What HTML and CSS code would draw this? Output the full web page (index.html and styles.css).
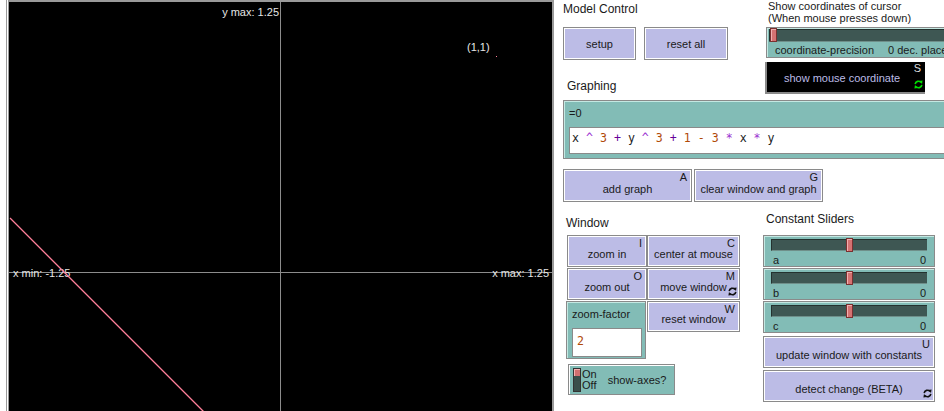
FILE: index.html
```html
<!DOCTYPE html>
<html>
<head>
<meta charset="utf-8">
<link rel="stylesheet" href="styles.css">
</head>
<body>
<div class="app">
  <div class="view">
    <svg width="555" height="411" viewBox="0 0 555 411" class="view-svg">
      <rect x="0" y="0" width="555" height="411" fill="#ffffff"/>
      <rect x="6" y="0" width="1" height="411" fill="#9a9a9a"/>
      <rect x="8" y="0" width="1" height="411" fill="#9a9a9a"/>
      <rect x="9" y="0" width="544" height="2" fill="#9a9a9a"/>
      <rect x="9" y="2" width="543" height="409" fill="#000000"/>
      <rect x="552" y="0" width="2" height="411" fill="#9a9a9a"/>
      <line x1="280.5" y1="2" x2="280.5" y2="411" stroke="#8c8c8c" stroke-width="1"/>
      <line x1="9" y1="272.5" x2="552" y2="272.5" stroke="#8c8c8c" stroke-width="1"/>
      <text x="279" y="16" class="vlabel" text-anchor="end">y max: 1.25</text>
      <text x="13" y="277" class="vlabel">x min: -1.25</text>
      <text x="549" y="277" class="vlabel" text-anchor="end">x max: 1.25</text>
      <text x="467" y="51" class="vlabel">(1,1)</text>
      <line x1="10" y1="218" x2="204" y2="412" stroke="#ff7f9a" stroke-width="1.3"/>
      <rect x="496" y="56" width="1" height="1" fill="#ff7f9a"/>
    </svg>
  </div>

  <div class="panel">
    <div class="top">
      <div class="mc">
        <div class="note big mc-label">Model Control</div>
        <div class="btn-row">
          <div class="btn setup"><span class="btn-text">setup</span></div>
          <div class="btn reset"><span class="btn-text">reset all</span></div>
        </div>
        <div class="note big graph-label">Graphing</div>
      </div>
      <div class="sc">
        <div class="note small coords-note">Show coordinates of cursor<br>(When mouse presses down)</div>
        <div class="slider prec">
          <div class="track"><div class="knob knob-left"></div></div>
          <div class="slider-labels"><span>coordinate-precision</span><span class="prec-val">0 dec. places</span></div>
        </div>
        <div class="btn black-btn">
          <span class="btn-text">show mouse coordinate</span>
          <span class="key key-light">S</span>
          <svg class="cycle" width="9" height="9" viewBox="0 0 9 9">
            <path d="M1.2 4.2 A3.3 3.3 0 0 1 7 2.4" fill="none" stroke="#00e000" stroke-width="1.6"/>
            <path d="M5.2 1 L8.6 0.6 L8 4 Z" fill="#00e000"/>
            <path d="M7.8 4.8 A3.3 3.3 0 0 1 2 6.6" fill="none" stroke="#00e000" stroke-width="1.6"/>
            <path d="M3.8 8 L0.4 8.4 L1 5 Z" fill="#00e000"/>
          </svg>
        </div>
      </div>
    </div>

    <div class="input-box">
      <div class="input-label">=0</div>
      <div class="input-field code"><span class="v">x</span> <span class="op">^</span> <span class="n">3</span> <span class="pl">+</span> <span class="v">y</span> <span class="op">^</span> <span class="n">3</span> <span class="pl">+</span> <span class="n">1</span> <span class="n">-</span> <span class="n">3</span> <span class="op">*</span> <span class="v">x</span> <span class="op">*</span> <span class="v">y</span></div>
    </div>

    <div class="btn-row graph-btns">
      <div class="btn add"><span class="btn-text">add graph</span><span class="key">A</span></div>
      <div class="btn clear"><span class="btn-text">clear window and graph</span><span class="key">G</span></div>
    </div>

    <div class="bottom">
      <div class="win">
        <div class="note big win-label">Window</div>
        <div class="win-grid">
          <div class="win-left">
            <div class="btn wbtn"><span class="btn-text">zoom in</span><span class="key">I</span></div>
            <div class="btn wbtn"><span class="btn-text">zoom out</span><span class="key">O</span></div>
            <div class="zf">
              <div class="input-label">zoom-factor</div>
              <div class="zf-field code"><span class="n">2</span></div>
            </div>
          </div>
          <div class="win-right">
            <div class="btn wbtn2"><span class="btn-text">center at mouse</span><span class="key">C</span></div>
            <div class="btn wbtn2"><span class="btn-text">move window</span><span class="key">M</span>
              <svg class="cycle" width="9" height="9" viewBox="0 0 9 9">
                <path d="M1.2 4.2 A3.3 3.3 0 0 1 7 2.4" fill="none" stroke="#111" stroke-width="1.6"/>
                <path d="M5.2 1 L8.6 0.6 L8 4 Z" fill="#111"/>
                <path d="M7.8 4.8 A3.3 3.3 0 0 1 2 6.6" fill="none" stroke="#111" stroke-width="1.6"/>
                <path d="M3.8 8 L0.4 8.4 L1 5 Z" fill="#111"/>
              </svg>
            </div>
            <div class="btn wbtn2 reset-win"><span class="btn-text">reset window</span><span class="key">W</span></div>
          </div>
        </div>
        <div class="switch">
          <div class="toggle"><div class="toggle-top"></div><div class="toggle-bot"></div></div>
          <div class="onoff"><span>On</span><span>Off</span></div>
          <div class="switch-label">show-axes?</div>
        </div>
      </div>

      <div class="consts">
        <div class="note big const-label">Constant Sliders</div>
        <div class="slider cs">
          <div class="track"><div class="knob knob-mid"></div></div>
          <div class="slider-labels"><span>a</span><span>0</span></div>
        </div>
        <div class="slider cs">
          <div class="track"><div class="knob knob-mid"></div></div>
          <div class="slider-labels"><span>b</span><span>0</span></div>
        </div>
        <div class="slider cs">
          <div class="track"><div class="knob knob-mid"></div></div>
          <div class="slider-labels"><span>c</span><span>0</span></div>
        </div>
        <div class="btn cbtn update"><span class="btn-text">update window with constants</span><span class="key">U</span></div>
        <div class="btn cbtn"><span class="btn-text">detect change (BETA)</span>
          <svg class="cycle" width="9" height="9" viewBox="0 0 9 9">
            <path d="M1.2 4.2 A3.3 3.3 0 0 1 7 2.4" fill="none" stroke="#111" stroke-width="1.6"/>
            <path d="M5.2 1 L8.6 0.6 L8 4 Z" fill="#111"/>
            <path d="M7.8 4.8 A3.3 3.3 0 0 1 2 6.6" fill="none" stroke="#111" stroke-width="1.6"/>
            <path d="M3.8 8 L0.4 8.4 L1 5 Z" fill="#111"/>
          </svg>
        </div>
      </div>
    </div>
  </div>
</div>
</body>
</html>
```

FILE: styles.css
```css
html, body {
  margin: 0;
  padding: 0;
  background: #ffffff;
}
body {
  width: 944px;
  height: 411px;
  overflow: hidden;
  font-family: "Liberation Sans", Arial, sans-serif;
  font-size: 11px;
  color: #1a1a1a;
}
.app {
  display: flex;
  width: 944px;
  height: 411px;
}
.view {
  width: 555px;
  height: 411px;
  flex: none;
}
.view-svg {
  display: block;
}
.vlabel {
  font-family: "Liberation Sans", Arial, sans-serif;
  font-size: 11px;
  fill: #e6e6e6;
}
.panel {
  flex: none;
  width: 389px;
  padding-left: 8px;
  box-sizing: border-box;
  overflow: hidden;
}
.note {
  color: #1a1a1a;
  white-space: nowrap;
}
.big {
  font-size: 12px;
  line-height: 14px;
}
.small {
  font-size: 11px;
  line-height: 12px;
}
.top {
  display: flex;
  height: 100px;
}
.mc {
  width: 202px;
  flex: none;
}
.mc-label {
  margin-top: 2px;
  height: 14px;
}
.btn-row {
  display: flex;
}
.mc .btn-row {
  margin-top: 11px;
  gap: 8px;
}
.btn {
  position: relative;
  background: #bcbce6;
  border: 1px solid #8a8a8a;
  box-shadow: inset 1px 1px 0 #ffffff, inset -1px -1px 0 #ffffff;
  box-sizing: border-box;
  display: flex;
  align-items: center;
  justify-content: center;
  white-space: nowrap;
}
.btn-text {
  font-size: 11px;
  color: #1a1a1a;
}
.key {
  position: absolute;
  top: 1px;
  right: 4px;
  font-size: 11px;
  line-height: 12px;
  color: #1a1a1a;
}
.cycle {
  position: absolute;
  right: 2px;
  bottom: 3px;
}
.setup {
  width: 73px;
  height: 33px;
}
.reset {
  width: 84px;
  height: 33px;
}
.graph-label {
  margin-top: 19px;
  margin-left: 4px;
}
.sc {
  flex: none;
  width: 190px;
}
.coords-note {
  margin-top: 0;
  margin-left: 3px;
  height: 27px;
  color: #1a1a1a;
}
.slider {
  background: #82bcb6;
  border: 1px solid #8a8a8a;
  box-shadow: inset 1px 1px 0 #c4e8e2;
  box-sizing: border-box;
  padding: 2px 7px 0 7px;
}
.prec {
  width: 190px;
  height: 31px;
  margin-left: 1px;
  padding: 1px 0 0 2px;
}
.track {
  position: relative;
  height: 12px;
  background: #3e5753;
  border-top: 1px solid #24322f;
  border-left: 1px solid #24322f;
  border-bottom: 1px solid #6f8f8a;
  box-sizing: border-box;
}
.prec .track {
  height: 13px;
}
.knob {
  position: absolute;
  top: -2px;
  width: 7px;
  height: 14px;
  background: #d47272;
  border: 1px solid #7a3030;
  box-shadow: inset 1px 1px 0 #f0b0b0;
  box-sizing: border-box;
}
.knob-left {
  left: 0px;
}
.knob-mid {
  left: 74px;
}
.slider-labels {
  display: flex;
  justify-content: space-between;
  font-size: 11px;
  line-height: 13px;
  color: #1a1a1a;
  margin-top: 2px;
  padding: 0 1px;
  white-space: nowrap;
}
.slider-labels span {
  flex: none;
}
.prec .slider-labels {
  justify-content: flex-start;
  padding-left: 6px;
}
.prec-val {
  margin-left: 14px;
}
.black-btn {
  margin-top: 4px;
  width: 160px;
  height: 32px;
  background: #000000;
  border: none;
  border-left: 2px solid #8a8a8a;
  border-bottom: 2px solid #8a8a8a;
  box-shadow: none;
}
.black-btn .btn-text {
  color: #bcbce6;
  margin-right: 8px;
  margin-top: 2px;
}
.key-light {
  color: #dddddd;
  top: 0px;
}
.input-box {
  width: 400px;
  height: 59px;
  background: #82bcb6;
  border: 1px solid #8a8a8a;
  box-shadow: inset 1px 1px 0 #c4e8e2;
  box-sizing: border-box;
  padding: 6px 0 0 5px;
}
.input-label {
  font-size: 11px;
  line-height: 13px;
  color: #1a1a1a;
  height: 13px;
}
.input-field {
  margin-top: 7px;
  height: 27px;
  background: #ffffff;
  border: 1px solid #8a8a8a;
  box-sizing: border-box;
  padding: 3px 0 0 2px;
}
.code {
  font-family: "DejaVu Sans Mono", "Liberation Mono", monospace;
  font-size: 11.6px;
  line-height: 14px;
  white-space: pre;
}
.v { color: #222222; }
.op { color: #9a30d0; }
.n { color: #b04a08; }
.pl { color: #660099; }
.graph-btns {
  margin-top: 10px;
  gap: 2px;
}
.add {
  width: 129px;
  height: 33px;
}
.clear {
  width: 129px;
  height: 33px;
}
.add .btn-text {
  margin-top: 6px;
}
.clear .btn-text {
  margin-top: 6px;
}
.bottom {
  display: flex;
}
.win {
  flex: none;
  width: 200px;
  padding-left: 3px;
  box-sizing: border-box;
}
.win-label {
  margin-top: 14px;
  height: 14px;
}
.win-grid {
  display: flex;
  margin-top: 5px;
}
.win-left {
  width: 80px;
  flex: none;
  display: flex;
  flex-direction: column;
}
.win-right {
  flex: none;
  display: flex;
  flex-direction: column;
}
.wbtn {
  width: 80px;
  height: 32px;
  margin-left: 1px;
  margin-bottom: 1px;
}
.wbtn .btn-text, .wbtn2 .btn-text, .cbtn .btn-text {
  margin-top: 5px;
}
.wbtn2 {
  width: 93px;
  height: 32px;
  margin-left: 1px;
  margin-bottom: 1px;
}
.reset-win {
  height: 31px;
}
.zf {
  width: 80px;
  height: 58px;
  background: #82bcb6;
  border: 1px solid #8a8a8a;
  box-shadow: inset 1px 1px 0 #c4e8e2;
  box-sizing: border-box;
  padding: 6px 0 0 5px;
}
.zf-field {
  margin-top: 7px;
  width: 70px;
  height: 29px;
  background: #ffffff;
  border: 1px solid #8a8a8a;
  box-sizing: border-box;
  padding: 5px 0 0 4px;
}
.switch {
  margin-top: 5px;
  margin-left: 2px;
  width: 107px;
  height: 31px;
  background: #82bcb6;
  border: 1px solid #8a8a8a;
  box-shadow: inset 1px 1px 0 #ffffff;
  box-sizing: border-box;
  display: flex;
  align-items: center;
  padding-left: 4px;
}
.toggle {
  width: 8px;
  height: 24px;
  display: flex;
  flex-direction: column;
  border: 1px solid #333;
  box-sizing: border-box;
}
.toggle-top {
  height: 7px;
  background: #d07070;
  box-shadow: inset 1px 1px 0 #f4b0b0;
}
.toggle-bot {
  flex: 1;
  background: #3a4f4b;
}
.onoff {
  display: flex;
  flex-direction: column;
  font-size: 11px;
  line-height: 11px;
  margin-left: 1px;
}
.switch-label {
  margin-left: 11px;
  font-size: 11px;
}
.consts {
  flex: none;
  width: 180px;
}
.const-label {
  margin-top: 10px;
  margin-left: 3px;
  height: 14px;
}
.cs {
  width: 172px;
  height: 32px;
  padding: 3px 7px 0 7px;
  margin-bottom: 1px;
}
.consts .const-label + .cs {
  margin-top: 9px;
}
.cs .slider-labels {
  margin-top: 3px;
  padding: 0 1px 0 2px;
}
.cbtn {
  width: 172px;
  height: 32px;
  margin-bottom: 2px;
}
.update {
  margin-top: 3px;
}
```
